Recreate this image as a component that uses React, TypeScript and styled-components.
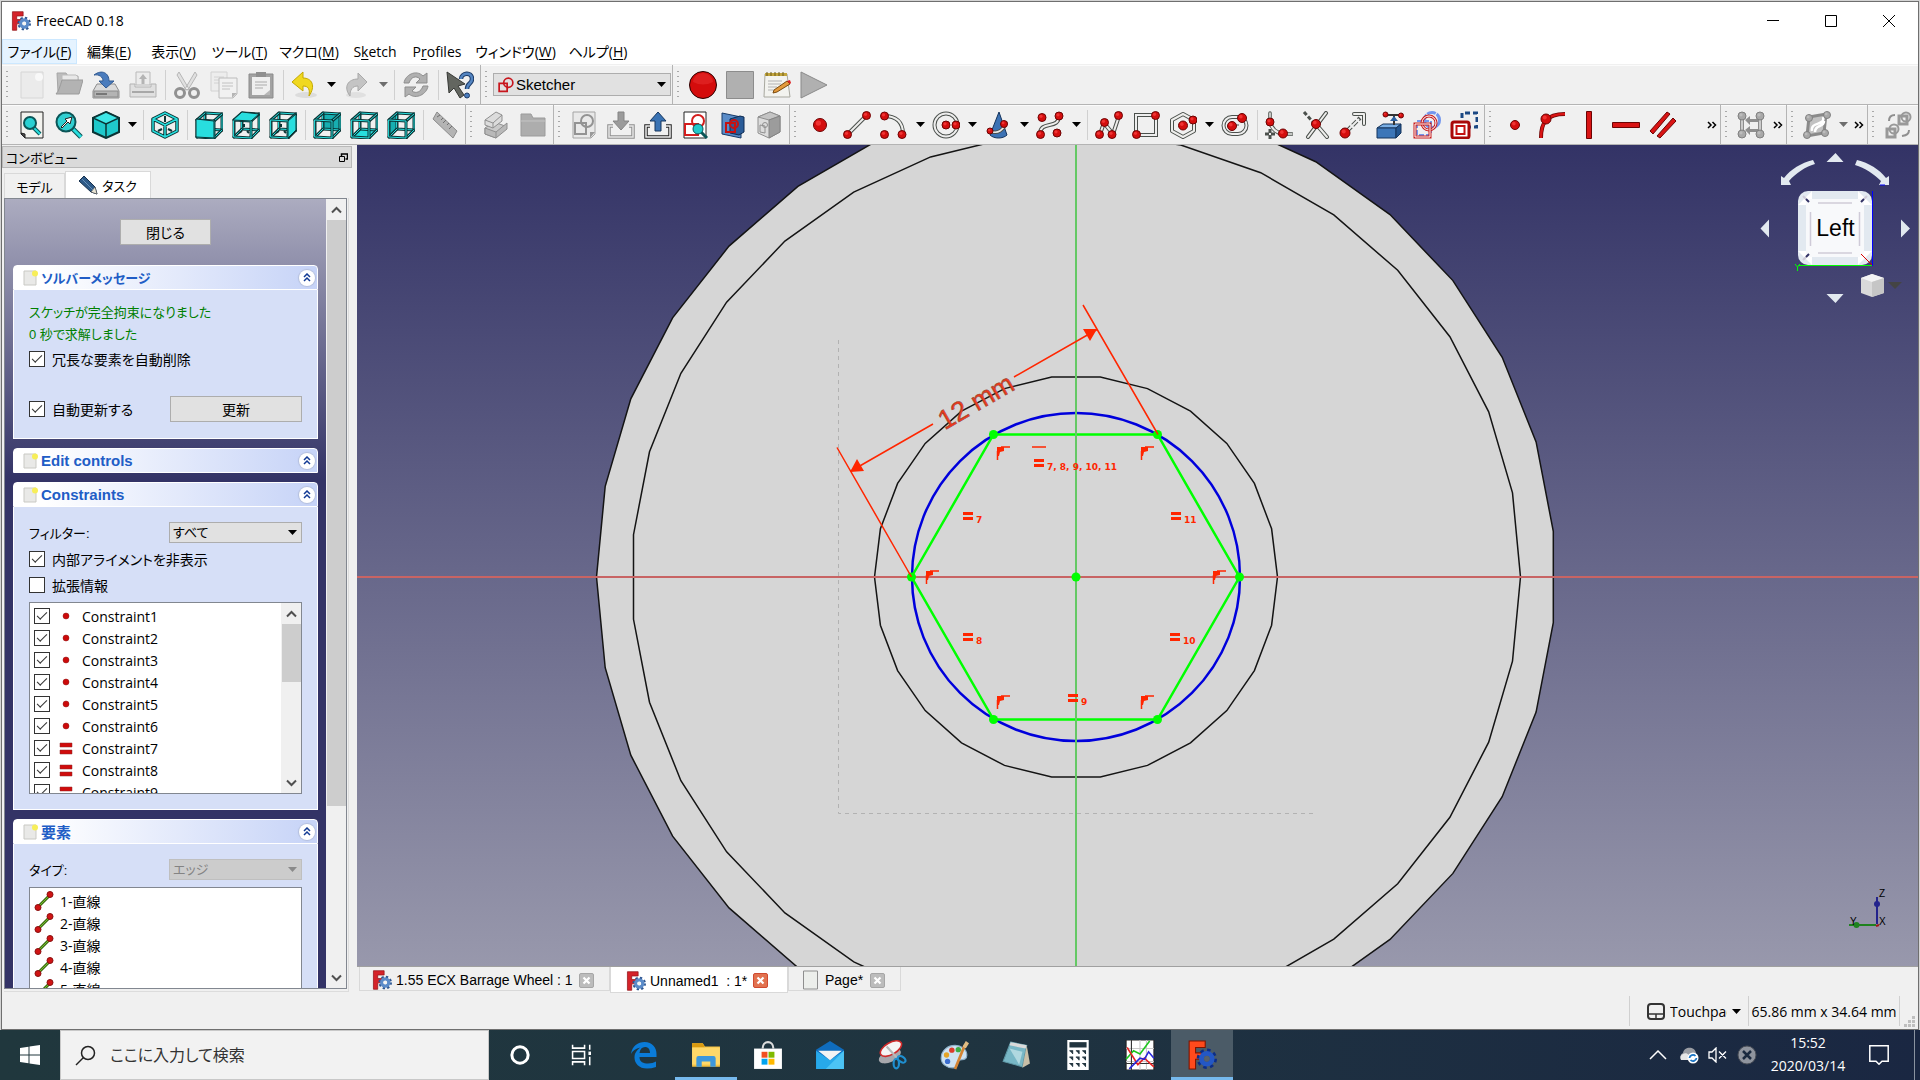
import React from "react";
import styled, { createGlobalStyle, css } from "styled-components";

const UI = `"Open Sans", "Noto Sans CJK JP", sans-serif`;
const GOTHIC = `"Liberation Sans", "Noto Sans CJK JP", sans-serif`;

const Global = createGlobalStyle`
  *, *::before, *::after { box-sizing: border-box; }
  html, body { margin: 0; padding: 0; background: #d4d4d4; }
  body { font-family: ${GOTHIC}; font-size: 14px; color: #000; font-feature-settings: "palt"; overflow: hidden; }
  button, select, input { font: inherit; color: inherit; margin: 0; font-feature-settings: inherit; }
  svg { display: block; flex: none; }
`;

/* ---------- shell ---------- */

const Desktop = styled.div`
  height: 100vh;
  display: flex;
  flex-direction: column;
`;
const AppWindow = styled.main`
  flex: 1;
  min-height: 0;
  margin: 1px 1px 0;
  border: 1px solid #6f6f6f;
  background: #f0f0f0;
  display: flex;
  flex-direction: column;
`;
const TitleBar = styled.header`
  height: 37px;
  background: #fff;
  display: flex;
  align-items: center;
  padding-left: 9px;
  font-family: ${UI};
  font-size: 14px;
`;
const TitleText = styled.span`
  flex: 1;
  padding-left: 5px;
`;
const CaptionButton = styled.button`
  width: 58px;
  height: 36px;
  border: 0;
  background: none;
  display: grid;
  place-items: center;
`;
const MenuBar = styled.nav`
  height: 26px;
  background: #fff;
  border-bottom: 1px solid #f0f0f0;
  display: flex;
  font-family: ${UI};
  font-size: 14px;
`;
const MenuItem = styled.button<{ $active?: boolean; $w: number }>`
  width: ${(p) => p.$w}px;
  border: 1px solid ${(p) => (p.$active ? "#cce8ff" : "transparent")};
  background: ${(p) => (p.$active ? "#e5f3ff" : "none")};
  padding: 0;
  white-space: nowrap;
  line-height: 24px;
  text-underline-offset: 2px;
`;

/* ---------- tool bars ---------- */

const ToolRow = styled.div`
  height: 40px;
  display: flex;
  border-bottom: 1px solid #b4b4b4;
  box-shadow: inset 0 1px #fbfbfb;
`;
const ToolGroup = styled.div<{ $grow?: boolean; $open?: boolean }>`
  display: flex;
  align-items: center;
  flex: ${(p) => (p.$grow ? "1 1 auto" : "none")};
  padding-right: 1px;
  border-right: ${(p) => (p.$open ? 0 : "1px solid #b4b4b4")};
`;
const Grip = styled.span`
  width: 12px;
  height: 32px;
  flex: none;
  background: radial-gradient(circle, #a8a8a8 1px, transparent 1px) 3px 0 / 4px 5px repeat-y;
`;
const Tool = styled.button<{ $menu?: boolean }>`
  width: ${(p) => (p.$menu ? 52 : 37)}px;
  height: 36px;
  flex: none;
  border: 0;
  padding: 0 0 0 4px;
  background: none;
  display: flex;
  align-items: center;
  gap: 8px;
`;
const Divider = styled.span`
  width: 1px;
  height: 30px;
  margin: 0 3px;
  flex: none;
  background: #d0d0d0;
`;
const More = styled.button`
  width: 15px;
  height: 36px;
  margin-left: auto;
  flex: none;
  border: 0;
  padding: 0;
  background: none;
  display: grid;
  place-items: center;
`;

/* ---------- form controls ---------- */

const PickWrap = styled.label<{ $off?: boolean; $h: number; $w: number }>`
  position: relative;
  display: flex;
  align-items: center;
  width: ${(p) => p.$w}px;
  height: ${(p) => p.$h}px;
  border: 1px solid ${(p) => (p.$off ? "#bfbfbf" : "#adadad")};
  background: ${(p) => (p.$off ? "#ccc" : "#e1e1e1")};
  color: ${(p) => (p.$off ? "#838383" : "#000")};
`;
const PickSelect = styled.select<{ $icon?: boolean }>`
  appearance: none;
  border: 0;
  background: none;
  width: 100%;
  height: 100%;
  padding: 0 16px 0 ${(p) => (p.$icon ? 22 : 3)}px;
  font-size: ${(p) => (p.$icon ? 15 : 13)}px;
  opacity: 1;
  outline: 0;
`;
const PickMark = styled.span<{ $side: "left" | "right" }>`
  position: absolute;
  ${(p) => p.$side}: 4px;
  top: 0;
  bottom: 0;
  display: grid;
  place-items: center;
  pointer-events: none;
`;
const Tick = styled.input`
  appearance: none;
  width: 16px;
  height: 16px;
  flex: none;
  border: 1px solid #333;
  background: #fff;
  display: grid;
  place-items: center;
  &:checked::after {
    content: "";
    width: 10px;
    height: 5px;
    margin-top: -4px;
    border: solid #333;
    border-width: 0 0 1px 1px;
    transform: rotate(-45deg);
  }
`;
const CheckLabel = styled.label`
  display: flex;
  align-items: center;
  gap: 7px;
  height: 26px;
  white-space: nowrap;
`;
const FieldLabel = styled.label`
  font-size: 13px;
`;
const PushButton = styled.button<{ $w: number }>`
  width: ${(p) => p.$w}px;
  height: 26px;
  border: 1px solid #adadad;
  background: #e1e1e1;
  padding: 0;
`;

/* ---------- left dock ---------- */

const Body = styled.div`
  flex: 1;
  min-height: 0;
  display: flex;
`;
const Dock = styled.aside`
  width: 355px;
  flex: none;
  display: flex;
  flex-direction: column;
  padding: 1px 3px 0 0;
`;
const DockTitle = styled.div`
  height: 22px;
  margin-right: 2px;
  border: 1px solid #b9b9b9;
  background: #dadada;
  display: flex;
  align-items: center;
  justify-content: space-between;
  padding: 0 3px;
  font-size: 13px;
`;
const DockTabs = styled.div`
  height: 30px;
  display: flex;
  align-items: flex-end;
  padding-left: 2px;
`;
const DockTab = styled.button<{ $on?: boolean }>`
  height: ${(p) => (p.$on ? 27 : 25)}px;
  width: ${(p) => (p.$on ? 86 : 61)}px;
  border: 1px solid #d9d9d9;
  border-bottom: 0;
  background: ${(p) => (p.$on ? "#fff" : "#f0f0f0")};
  padding: 0;
  display: flex;
  align-items: center;
  justify-content: center;
  gap: 4px;
  font-size: 13px;
`;
const DockFrame = styled.div`
  flex: 1;
  min-height: 0;
  margin: 0 5px 1px 2px;
  padding: 0 1px 2px 0;
  border: 1px solid #dcdcdc;
  border-width: 0 1px 1px 0;
  display: flex;
`;
const ScrollArea = styled.div`
  flex: 1;
  border: 1px solid #828790;
  display: flex;
  min-height: 0;
`;
const TaskList = styled.div`
  flex: 1;
  min-width: 0;
  padding: 20px 8px 0;
  overflow: hidden;
  display: flex;
  flex-direction: column;
  background: linear-gradient(#acacc0, #333366 280px);
`;
const CloseRow = styled.div`
  display: flex;
  justify-content: center;
  padding-bottom: 20px;
`;
const Card = styled.section`
  flex: none;
  margin-bottom: 9px;
`;
const CardHead = styled.h2<{ $kana?: boolean }>`
  margin: 0;
  height: 25px;
  border: 1px solid #fff;
  border-radius: 4px 4px 0 0;
  background: linear-gradient(90deg, #fff 10%, #c6d3f7);
  display: flex;
  align-items: center;
  gap: 3px;
  padding: 0 2px 0 8px;
  color: #215dc6;
  font-size: ${(p) => (p.$kana ? 13 : 15)}px;
  font-weight: 700;
`;
const CardTitle = styled.span`
  flex: 1;
`;
const Fold = styled.button`
  width: 16px;
  height: 16px;
  padding: 0;
  border: 0;
  border-radius: 50%;
  background: #fff;
  box-shadow: 0 0 1px 1px #b4bfdc;
  display: grid;
  place-items: center;
`;
const CardBody = styled.div<{ $tall: number }>`
  min-height: ${(p) => p.$tall}px;
  border: 1px solid #fff;
  border-top: 0;
  background: #d6dff7;
  padding: 12px 15px 15px;
  display: flex;
  flex-direction: column;
`;
const Solved = styled.p`
  margin: 0;
  font-size: 13px;
  line-height: 22px;
  color: #008000;
`;
const FormRow = styled.div<{ $gap?: number }>`
  display: flex;
  align-items: center;
  justify-content: space-between;
  margin-top: ${(p) => p.$gap ?? 0}px;
`;
const ListBox = styled.div<{ $h: number; $gap: number }>`
  height: ${(p) => p.$h}px;
  margin-top: ${(p) => p.$gap}px;
  border: 1px solid #828790;
  background: #fff;
  display: flex;
  overflow: hidden;
  font-family: ${UI};
`;
const Rows = styled.ul`
  flex: 1;
  list-style: none;
  margin: 0;
  padding: 2px 4px;
`;
const Row = styled.li`
  height: 22px;
  display: flex;
  align-items: center;
`;
const RowLabel = styled.label<{ $tight?: boolean }>`
  display: flex;
  align-items: center;
  gap: ${(p) => (p.$tight ? 6 : 8)}px;
`;
const Track = styled.div`
  width: 20px;
  flex: none;
  background: #f0f0f0;
  display: flex;
  flex-direction: column;
  align-items: center;
`;
const Arrow = styled.button`
  height: 21px;
  width: 100%;
  padding: 0;
  border: 0;
  background: none;
  display: grid;
  place-items: center;
`;
const Thumb = styled.div<{ $share: number }>`
  width: 19px;
  flex: ${(p) => p.$share} 0 0;
  background: #cdcdcd;
`;
const Rest = styled.div<{ $share: number }>`
  flex: ${(p) => p.$share} 0 0;
`;

/* ---------- 3D view ---------- */

const Center = styled.section`
  flex: 1;
  min-width: 0;
  display: flex;
  flex-direction: column;
`;
const View = styled.div`
  position: relative;
  flex: 1;
  min-height: 0;
  overflow: hidden;
  background: linear-gradient(#333366, #9898ac);
`;
const Scene = styled.svg`
  width: 100%;
  height: 100%;
`;
const Corner = styled.div<{ $bottom?: boolean }>`
  position: absolute;
  right: 0;
  ${(p) => (p.$bottom ? css`bottom: 0;` : css`top: 0;`)}
`;
const DocTabs = styled.div`
  height: 27px;
  border-top: 1px solid #a0a0a0;
  display: flex;
  align-items: flex-start;
  padding-left: 2px;
`;
const DocTab = styled.div<{ $on?: boolean; $w: number }>`
  width: ${(p) => p.$w}px;
  height: ${(p) => (p.$on ? 26 : 24)}px;
  border: 1px solid #d9d9d9;
  border-top: 0;
  background: ${(p) => (p.$on ? "#fff" : "#f0f0f0")};
  display: flex;
  align-items: center;
  padding: ${(p) => (p.$on ? "2px 19px 0 15px" : "3px 15px 0 12px")};
  gap: 4px;
`;
const DocName = styled.button`
  flex: 1;
  border: 0;
  padding: 0;
  background: none;
  text-align: left;
  white-space: pre;
`;
const DocClose = styled.button<{ $on?: boolean }>`
  width: 15px;
  height: 15px;
  padding: 0;
  border: 1px solid ${(p) => (p.$on ? "#d04a30" : "#a6a6a6")};
  border-radius: 2px;
  background: ${(p) => (p.$on ? "#e2724f" : "#bcbcbc")};
  display: grid;
  place-items: center;
`;

/* ---------- status bar ---------- */

const Status = styled.footer`
  height: 36px;
  display: flex;
  justify-content: flex-end;
  align-items: center;
  font-family: ${UI};
  font-size: 14px;
`;
const StatusLine = styled.span`
  width: 1px;
  height: 30px;
  background: #d0d0d0;
`;
const NavStyle = styled.button`
  width: 118px;
  border: 0;
  padding: 0 7px 0 17px;
  background: none;
  display: flex;
  align-items: center;
  gap: 5px;
`;
const NavName = styled.span`
  width: 59px;
  overflow: hidden;
  white-space: nowrap;
  text-align: left;
`;
const Size = styled.span`
  width: 150px;
  text-align: center;
  white-space: nowrap;
`;
const SizeGrip = styled.span`
  width: 18px;
  align-self: flex-end;
  display: grid;
  place-items: center;
  padding-bottom: 2px;
`;

/* ---------- task bar ---------- */

const TaskBar = styled.footer`
  height: 50px;
  background: linear-gradient(90deg, #20373d, #1f3440 50%, #1a2742);
  display: flex;
  color: #fff;
  font-family: ${UI};
`;
const TaskButton = styled.button<{ $on?: boolean; $line?: boolean; $w?: number }>`
  width: ${(p) => p.$w ?? 62}px;
  border: 0;
  padding: 0;
  background: ${(p) => (p.$on ? "#4b5b67" : "none")};
  box-shadow: ${(p) => (p.$line ? "inset 0 -3px #76b9ed" : "none")};
  display: grid;
  place-items: center;
`;
const SearchBox = styled.label`
  width: 429px;
  border: 1px solid #c8c8c8;
  background: #f2f2f2;
  display: flex;
  align-items: center;
  gap: 14px;
  padding-left: 14px;
`;
const SearchInput = styled.input`
  flex: 1;
  border: 0;
  padding: 0;
  outline: 0;
  background: none;
  font-size: 16px;
  &::placeholder { color: #333; opacity: 1; }
`;
const Tray = styled.div`
  margin-left: auto;
  display: flex;
  align-items: stretch;
`;
const Clock = styled.time`
  width: 92px;
  text-align: center;
  line-height: 23px;
  font-size: 14px;
  padding-top: 1px;
`;
const PeekEdge = styled.span`
  width: 6px;
  margin-left: 10px;
  border-left: 1px solid #8a93a0;
`;

/* ---------- icon primitives ---------- */

type P = { children?: React.ReactNode; s?: number };
const I = ({ children, s = 28 }: P) => (
  <svg width={s} height={s} viewBox="0 0 28 28" fill="none" aria-hidden="true">{children}</svg>
);
const Ball = ({ x, y, r = 4, gray }: { x: number; y: number; r?: number; gray?: boolean }) => (
  <g>
    <circle cx={x} cy={y} r={r} fill={gray ? "#a8a8a8" : "#d40e0e"} stroke={gray ? "#808080" : "#6d0303"} />
    <circle cx={x - r * 0.25} cy={y - r * 0.3} r={r * 0.4} fill={gray ? "#bcbcbc" : "#f03434"} />
  </g>
);
const Tube = ({ d, w = 4, a = "#4b504c", b = "#eeeeec" }: { d: string; w?: number; a?: string; b?: string }) => (
  <g strokeLinejoin="round" strokeLinecap="round">
    <path d={d} stroke={a} strokeWidth={w} />
    <path d={d} stroke={b} strokeWidth={w - 2} />
  </g>
);
const Down = ({ c = "#000" }: { c?: string }) => (
  <svg width="9" height="5" viewBox="0 0 9 5" aria-hidden="true"><path d="M0 0h9L4.500 5z" fill={c} /></svg>
);
const Chev = ({ up, c = "#505050" }: { up?: boolean; c?: string }) => (
  <svg width="11" height="8" viewBox="0 0 11 8" fill="none" aria-hidden="true">
    <path d={up ? "M1 6.500L5.500 2 10 6.500" : "M1 1.500L5.500 6 10 1.500"} stroke={c} strokeWidth="2" />
  </svg>
);
const Chevrons = () => (
  <svg width="10" height="8" viewBox="0 0 10 8" fill="none" aria-hidden="true">
    <path d="M1 1l3 3-3 3M5.500 1l3 3-3 3" stroke="#000" strokeWidth="1.500" />
  </svg>
);
const T = "#28dede";
const D = "#0b3435";
const cubeEdges = [
  "M10 2L27 3V19L10 18Z",
  "M2 9L10 2M19 10L27 3M19 27L27 19M2 26L10 18",
  "M2 9L19 10V27L2 26Z",
];
const Box = ({ face }: { face: string }) => {
  const faces: Record<string, string> = {
    front: "M1 8L19 10V27L1 26Z",
    top: "M1 9L10 1 27 3 19 10Z",
    right: "M19 10L27 3V19L19 27Z",
    rear: "M10 2L27 3V19L10 18Z",
    bottom: "M2 26L10 18 27 19 19 27Z",
    left: "M2 9L10 2V18L2 26Z",
  };
  const behind = ["rear", "bottom", "left"].includes(face);
  const f = <path d={faces[face]} fill={face === "left" || face === "rear" ? "#17aeb0" : T} stroke={D} />;
  return (
    <I>
      {behind && f}
      <Tube d={cubeEdges[0]} w={3} a={D} b={T} />
      <Tube d={cubeEdges[1]} w={3} a={D} b={T} />
      <Tube d={cubeEdges[2]} w={3} a={D} b={T} />
      {!behind && <path d="M7 22l3-2M12 13v3M15 20l2 2" stroke={D} strokeWidth="2" />}
      {!behind && f}
    </I>
  );
};
const Logo = ({ s = 20, vivid }: { s?: number; vivid?: boolean }) => (
  <svg width={s} height={s} viewBox="0 0 28 28" fill="none" aria-hidden="true">
    <path d="M2 1h15v6H8v5h6v6H8v9H2z" fill={vivid ? "#ff4a1c" : "#d5232a"} stroke={vivid ? "#7c1400" : "#8e1116"} />
    <circle cx="18.500" cy="17.500" r="8" stroke={vivid ? "#0c2d86" : "#2f5791"} strokeWidth="3" strokeDasharray="3.200 3.080" />
    <circle cx="18.500" cy="17.500" r="5" stroke={vivid ? "#2457c4" : "#5b8bc9"} strokeWidth="4.500" />
    <circle cx="18.500" cy="17.500" r="2.500" fill={vivid ? "#57616e" : "#f4f4f4"} />
  </svg>
);

const G = "#a4a4a4";

const icons: Record<string, React.ReactNode> = {
  new: <I><path d="M3 1h22v26H3z" fill="#ebebeb" stroke="#d6d6d6" /><circle cx="21" cy="6" r="4" fill="#f8f8f8" /></I>,
  open: <I><path d="M2 2h9l2 3h10v16H3z" fill="#bcbcbc" stroke="#a6a6a6" /><path d="M7 4h14l2 2v10H7z" fill="#e8e8e8" stroke="#bbb" /><path d="M7 9h21l-4 14H1c3-3 4-8 6-14z" fill="#b3b3b3" stroke="#9b9b9b" /></I>,
  save: <I><path d="M5 13h18l4 7v7H1v-7z" fill="#dadada" stroke="#8d8d8d" /><path d="M2 20h24v6H2z" fill="#b4b4b4" stroke="#8a8a8a" /><path d="M4 22h11v2H4z" fill="#777" /><path d="M2 4c8-6 15-2 15 6h5l-8 7-7-7h4c0-4-4-7-9-6z" fill="#4a7cbd" stroke="#315a92" /></I>,
  print: <I><path d="M7 1h14v13H7z" fill="#ececec" stroke="#bababa" /><path d="M14 3l4 5h-2.500v5h-3V8H10z" fill="#b4b4b4" /><path d="M1 13h5v3h16v-3h5v13H1z" fill="#e0e0e0" stroke="#b3b3b3" /><path d="M3 21h22" stroke="#a8a8a8" strokeWidth="2" /></I>,
  cut: <I><path d="M6 1l10 17-3 1L4 4zM22 1L12 18l3 1 9-15z" fill="#e0e0e0" stroke="#b6b6b6" /><ellipse cx="7" cy="22" rx="4.500" ry="4.500" stroke="#919191" strokeWidth="3" /><ellipse cx="21" cy="22" rx="4.500" ry="4.500" stroke="#919191" strokeWidth="3" /></I>,
  copy: <I><path d="M1 1h16v19H1z" fill="#ededed" stroke="#d2d2d2" /><path d="M4 6h10M4 9h10M4 12h6" stroke="#d2d2d2" /><path d="M9 7h18v16l-4 4H9z" fill="#f1f1f1" stroke="#bcbcbc" /><path d="M12 12h11M12 15h11M12 18h8" stroke="#c2c2c2" /><path d="M27 22l-5 5v-5z" fill="#b5b5b5" /></I>,
  paste: <I><path d="M2 3h24v24H2z" fill="#a2a2a2" stroke="#8b8b8b" /><path d="M5 6h18v18H5z" fill="#efefef" /><path d="M9 1h10v5H9z" fill="#8f8f8f" /><path d="M8 11h12M8 14h12M8 17h8" stroke="#c2c2c2" strokeWidth="1.500" /><path d="M23 19l-6 5h6z" fill="#b7b7b7" /></I>,
  undo: <I><ellipse cx="15" cy="24" rx="11" ry="3" fill="#dcdcdc" /><path d="M12 1v6c9 0 13 8 6 18 1-6 0-10-6-10v5L1 11z" fill="#f0d820" stroke="#c4a800" /></I>,
  redo: <I><ellipse cx="13" cy="24" rx="10" ry="3" fill="#e0e0e0" /><path d="M15 2v6C5 8 0 16 7 25c0-6 2-10 8-10v5l9-9z" fill="#c4c4c4" stroke="#a9a9a9" /></I>,
  refresh: <I><path d="M2 12C3 4 14-2 21 5l4-3v10H14l4-4c-4-4-9-2-11 4z" fill="#b0b0b0" stroke="#8d8d8d" /><path d="M26 15c-1 8-12 14-19 8l-4 3V16h11l-4 4c4 3 9 1 11-5z" fill="#b0b0b0" stroke="#8d8d8d" /></I>,
  whats: <I><path d="M1 1l18 12-7 2 6 9-4 3-6-10-5 5z" fill="#636660" stroke="#363835" /><path d="M15 8c0-6 11-8 11 0 0 5-5 4-5 10" stroke="#1d3b66" strokeWidth="4.500" /><path d="M15 8c0-6 11-8 11 0 0 5-5 4-5 10" stroke="#5485c2" strokeWidth="2.500" /><circle cx="21" cy="24.500" r="2.500" fill="#4a7cbd" stroke="#1d3b66" /></I>,
  record: <I><circle cx="14" cy="14" r="13.500" fill="#d40c0c" stroke="#280000" /><path d="M4 11a10 9 0 0 1 20 0q-10 5-20 0" fill="#e83232" opacity=".5" /></I>,
  stop: <I><path d="M.5.500h27v27H.5z" fill="#b0b0b0" stroke="#8c8c8c" /></I>,
  note: <I><path d="M2 3h22l3 23H1z" fill="#f3f3ef" stroke="#a8a89f" /><path d="M2 2h22v3H2z" fill="#c2a53b" /><path d="M4 1v4M8 1v4M12 1v4M16 1v4M20 1v4" stroke="#6b5b1d" /><path d="M5 10h14M5 13h13M5 16h9M5 19h6" stroke="#b3b3b3" /><path d="M11 19l13-9 3 3-13 8-4 1z" fill="#e49a3b" stroke="#7b4b10" /><path d="M24 10l3-1 1 3-1 1z" fill="#d22" /></I>,
  play: <I><path d="M1 1l26 13L1 27z" fill="#b0b0b0" stroke="#8a8a8a" /></I>,
  fitall: <I><path d="M3 1h22v26H7l-4-4z" fill="#f2f2ee" stroke="#222" /><path d="M3 22l4 5v-4z" fill="#555" stroke="#222" /><path d="M15 16l7 7" stroke="#0a5557" strokeWidth="4" /><path d="M15 16l7 7" stroke={T} strokeWidth="2" /><circle cx="12" cy="12" r="6" fill="#2ad0d2" stroke="#0a5557" strokeWidth="2" /></I>,
  fitsel: <I><path d="M17 17l9 9" stroke="#0a4d4f" strokeWidth="5" /><path d="M17 17l9 9" stroke={T} strokeWidth="3" /><circle cx="11" cy="11" r="9.500" fill="#31cfd1" stroke="#0a5557" strokeWidth="2" /><path d="M6 16l6-6-2-2 7-2-2 7-2-2-6 6z" fill="#fff" stroke="#222" /></I>,
  cube: <I><path d="M14 1l13 6v14l-13 6-13-6V7z" fill="#1fc9cb" stroke={D} strokeWidth="2" /><path d="M14 1l13 6-13 6L1 7z" fill="#3ee6e6" stroke={D} strokeWidth="1.500" /><path d="M14 13v14" stroke={D} strokeWidth="1.500" /></I>,
  axo: <I><Tube d="M14 2l12 6v12l-12 6-12-6V8zM2 8l12 6 12-6M14 14v12" w={3.500} a={D} b={T} /><path d="M14 5v6M7 20l4-2M17 18l4 2" stroke={D} strokeWidth="2" /></I>,
  ruler: <I><path d="M6 1l20 19-4 7L2 8z" fill="#b4b4b4" stroke="#8c8c8c" /><path d="M9 4l-3 2M12 7l-2 2M15 9l-3 3M18 12l-2 2M21 15l-3 3" stroke="#6f6f6f" /></I>,
  part: <I><path d="M3 17l9-6 11 4-9 12-11-4z" fill="#cacaca" stroke="#8f8f8f" /><path d="M3 17l11 4 11-9v6l-11 9-11-4z" fill="#b9b9b9" stroke="#8f8f8f" /><path d="M3 9l11-8 6 3v6l-9 7-8-3z" fill="#dcdcdc" stroke="#8f8f8f" /><path d="M3 9l8 3 9-8M11 12v5" stroke="#8f8f8f" /><path d="M14 21v6" stroke="#8f8f8f" /></I>,
  folder: <I><path d="M2 3h10l2 4h12v18H2z" fill="#adadad" stroke="#9b9b9b" /><path d="M2 10h24" stroke="#c4c4c4" /></I>,
  sketch: <I><path d="M3 1h22v22l-4 4H3z" fill="#e9e9e9" stroke={G} /><path d="M5 12h11v11H5z" stroke="#939393" strokeWidth="2" /><circle cx="17" cy="10" r="6" stroke="#939393" strokeWidth="2" /><path d="M25 21l-5 6v-6z" fill="#999" /></I>,
  into: <I><path d="M6 15H2v11h24V15h-4" stroke="#8e8e8e" strokeWidth="3.500" /><path d="M6 15H2v11h24V15h-4" stroke="#e6e6e6" strokeWidth="1.500" /><path d="M11 1h6v9h5l-8 9-8-9h5z" fill="#9b9b9b" stroke="#848484" /></I>,
  outof: <I><path d="M6 15H2v11h24V15h-4" stroke="#222" strokeWidth="3.500" /><path d="M6 15H2v11h24V15h-4" stroke="#eee" strokeWidth="1.500" /><path d="M14 1l8 9h-5v10h-6V10H6z" fill="#3a73b4" stroke="#16365f" /></I>,
  viewsk: <I><path d="M3 1h22v26H3z" fill="#fff" stroke="#222" /><path d="M4 13h13v11H4z" stroke="#d31d1d" strokeWidth="2" /><circle cx="17" cy="10" r="6" stroke="#d31d1d" strokeWidth="2" /><path d="M20 21l6 6" stroke="#0a5557" strokeWidth="3" /><circle cx="17" cy="18" r="5" fill="#22c9cb" stroke="#0a5557" /></I>,
  mapsk: <I><path d="M4 2l19 4v21L4 23z" fill="#5a8cc8" stroke="#173a68" /><path d="M12 8l10-3 4 1v15l-5 3-9-2z" fill="#2a5c98" stroke="#0e2b52" /><path d="M8 12h9v9H8z" stroke="#c51212" strokeWidth="2" /><circle cx="16" cy="13" r="4" stroke="#c51212" strokeWidth="2" /></I>,
  solid: <I><path d="M3 6l12-5 10 4v16l-11 6-11-5z" fill="#dcdcdc" stroke="#8e8e8e" /><path d="M3 6l12-5 10 4-11 4z" fill="#c4c4c4" stroke="#8e8e8e" /><path d="M14 9l11-4v16l-11 6z" fill="#9c9c9c" stroke="#848484" /><path d="M5 14l5 1v7l-5-1z" stroke="#909090" /><circle cx="10" cy="14" r="2.500" stroke="#909090" /></I>,
  point: <I><Ball x={14} y={14} r={6.500} /></I>,
  line: <I><Tube d="M5 23L23 5" /><Ball x={4.500} y={23.500} /><Ball x={23.500} y={4.500} /></I>,
  arc: <I><Tube d="M4 5c12 0 19 6 19 18" /><Ball x={4.500} y={5} /><Ball x={4.500} y={23.500} /><Ball x={22} y={23.500} /></I>,
  circle: <I><circle cx="14" cy="14" r="11.500" stroke="#4b504c" strokeWidth="4" /><circle cx="14" cy="14" r="11.500" stroke="#eee" strokeWidth="2" /><Ball x={14} y={14} /><Ball x={24} y={14} /></I>,
  conic: <I><path d="M15 1l8 23c-4 4-13 4-17 0z" fill="#3c72b4" stroke="#15345d" /><Tube d="M6 20c8 4 14-2 16-8" w={3.500} /><Ball x={6} y={20} r={3} /><Ball x={20} y={13} r={3.500} /></I>,
  spline: <I><Tube d="M4 23c0-14 19-4 19-18" /><Ball x={6} y={6.500} /><Ball x={23} y={5} /><Ball x={4.500} y={23.500} /><Ball x={21} y={22} /></I>,
  poly: <I><Tube d="M5 23L9 12 18 23 24 5" /><Ball x={4.500} y={23.500} /><Ball x={9.500} y={11.500} /><Ball x={17} y={23.500} /><Ball x={23.500} y={4.500} /></I>,
  rect: <I><path d="M4 4h20v20H4z" stroke="#4b504c" strokeWidth="4" /><path d="M4 4h20v20H4z" stroke="#eee" strokeWidth="2" /><Ball x={23.500} y={4.500} /><Ball x={4.500} y={23.500} /></I>,
  hex: <I><Tube d="M14 3l11 6v11l-11 6-11-6V9z" /><Ball x={14} y={14.500} r={4.500} /><Ball x={24} y={9} /></I>,
  slot: <I><rect x="2.500" y="6" width="23" height="17" rx="8.500" stroke="#4b504c" strokeWidth="4" /><rect x="2.500" y="6" width="23" height="17" rx="8.500" stroke="#eee" strokeWidth="2" /><path d="M10 14h8" stroke="#4b504c" /><Ball x={11} y={15} r={4.500} /><Ball x={21} y={7} r={4.500} /></I>,
  fillet: <I><path d="M5 18v10M0 23h10" stroke="#4b504c" strokeWidth="3" strokeDasharray="4 2" /><Tube d="M5 2v8M19 23h8" w={3.500} /><Tube d="M5 10c1 7 6 12 14 13" /><Ball x={5} y={11} /><Ball x={18} y={22.500} r={4.500} /></I>,
  trim: <I><Tube d="M24 2L6 26M14 13l11 13" /><path d="M2 1l9 10" stroke="#4b504c" strokeWidth="3" strokeDasharray="4 2" /><Ball x={14} y={13} r={4.500} /></I>,
  extend: <I><path d="M8 20L21 7" stroke="#4b504c" strokeWidth="4" strokeDasharray="6 2" /><path d="M9 19L20 8" stroke="#eee" strokeWidth="2" /><Tube d="M15 3h10v10" /><Ball x={6} y={22} r={5} /></I>,
  external: <I><path d="M1 17l6-4h18l-5 4z" fill="#79aee4" stroke="#15345d" /><path d="M1 17h19v10H1z" fill="#3c76b8" stroke="#15345d" /><path d="M20 17l5-4v9l-5 5z" fill="#22558f" stroke="#15345d" /><path d="M10 4h16M18 4v10" stroke="#333" strokeWidth="2" /><path d="M14 10l4-5 4 5z" fill="#2c62a2" /><Ball x={9.500} y={3.500} r={2.500} /><Ball x={25} y={4.500} r={2.500} /></I>,
  carbon: <I><circle cx="19" cy="9" r="7.500" stroke="#7397ee" strokeWidth="3" strokeDasharray="9 1" /><path d="M4 10h14v14H4z" stroke="#7397ee" strokeWidth="2" strokeDasharray="5 2" /><circle cx="16" cy="12" r="7" stroke="#c81c1c" strokeWidth="3" /><circle cx="16" cy="12" r="7" stroke="#fff" /><path d="M2 13h15v13H2z" stroke="#c81c1c" strokeWidth="3" /><path d="M2 13h15v13H2z" stroke="#fff" /></I>,
  toggle: <I><path d="M12 7V2h15v14h-7" stroke="#1b4883" strokeWidth="3" strokeDasharray="5 3" /><rect x="2" y="11" width="17" height="16" rx="2" fill="#fff" stroke="#a80808" strokeWidth="3" /><path d="M6.500 15h8v8h-8z" stroke="#c40f0f" strokeWidth="2" /></I>,
  cpoint: <I><Ball x={14} y={14} r={4.500} /></I>,
  conobj: <I><path d="M3 27C3 12 8 3 27 3" stroke="#6d0303" strokeWidth="4" /><path d="M3 27C3 12 8 3 27 3" stroke="#d91414" strokeWidth="2.500" /><Ball x={8} y={8} r={5} /></I>,
  cvert: <I><path d="M11.500.500h5v27h-5z" fill="#d91414" stroke="#6d0303" /></I>,
  chor: <I><path d="M.5 11.500h27v5H.5z" fill="#d91414" stroke="#6d0303" /></I>,
  cpar: <I><path d="M1 20L18 1l3 2L4 23zM8 25L24 7l3 3-16 17z" fill="#d91414" stroke="#6d0303" /></I>,
  gtool: <I><Tube d="M5 5v18M23 5v18" a="#8d8d8d" b="#ccc" /><path d="M8 9l5-4v3h8v3h-8v3zM8 19l5-4v3h8v3h-8v3z" fill="#8f8f8f" /><Ball gray x={5} y={5} /><Ball gray x={5} y={23} /><Ball gray x={23} y={5} /><Ball gray x={23} y={23} /></I>,
  gspline: <I><path d="M6 6l17-3-2 19-17 3z" fill="#c2c2c2" stroke="#8a8a8a" strokeWidth="3" /><path d="M9 20c-2-10 14-5 11-14M12 21c0-8 9-4 9-11" stroke="#fff" strokeWidth="2.500" /><Ball gray x={6} y={7} r={3.500} /><Ball gray x={24} y={4} r={3.500} /><Ball gray x={4} y={24} r={3.500} /><Ball gray x={22} y={22} r={3.500} /></I>,
  gvirt: <I><path d="M15 5h8v8h-8zM3 18h8v8H3z" stroke="#999" strokeWidth="3" /><circle cx="22" cy="6" r="4.500" stroke="#999" strokeWidth="2" /><circle cx="10" cy="18" r="4.500" stroke="#999" strokeWidth="2" /><path d="M5 10c0-4 2-6 6-6M25 19c0 4-2 5-7 6" stroke="#8f8f8f" strokeWidth="2" /></I>,
};
for (const f of ["front", "top", "right", "rear", "bottom", "left"]) icons[f] = <Box face={f} />;

const SketchMark = ({ s = 16 }: P) => (
  <I s={s}><path d="M2 11h14v14H2z" stroke="#c8161d" strokeWidth="3" /><circle cx="18" cy="10" r="8" stroke="#c8161d" strokeWidth="3" /></I>
);
const Note = () => (
  <svg width="16" height="16" viewBox="0 0 16 16" aria-hidden="true">
    <path d="M2 1h12v14H2z" fill="#e9e9e7" stroke="#c9c9c4" /><circle cx="13" cy="3.500" r="3" fill="#f7ee59" />
  </svg>
);

/* ---------- tool bar contents ---------- */

const Tools = ({ items }: { items: string[] }) => (
  <>
    {items.map((it, i) => {
      if (it === "|") return <Divider key={i} />;
      const menu = it.endsWith("+");
      const dim = it.endsWith("-+");
      const name = it.replace(/-?\+$/, "");
      return (
        <Tool key={i} $menu={menu} aria-label={name}>
          {icons[name]}
          {menu && <Down c={dim ? "#6e6e6e" : "#000"} />}
        </Tool>
      );
    })}
  </>
);
const Group = ({ items, more, grow, open }: { items: string; more?: boolean; grow?: boolean; open?: boolean }) => (
  <ToolGroup $grow={grow} $open={open}>
    <Grip />
    <Tools items={items.split(" ")} />
    {more && <More aria-label="more"><Chevrons /></More>}
  </ToolGroup>
);

const menus: [string, string, string, number][] = [
  ["ファイル(", "F", ")", 75], ["編集(", "E", ")", 64], ["表示(", "V", ")", 65], ["ツール(", "T", ")", 67], ["マクロ(", "M", ")", 72],
  ["S", "k", "etch", 60], ["P", "r", "ofiles", 64], ["ウィンドウ(", "W", ")", 93], ["ヘルプ(", "H", ")", 72],
];

/* ---------- task cards ---------- */

const TaskCard = ({ title, tall, kana, children }: { title: string; tall?: number; kana?: boolean; children?: React.ReactNode }) => (
  <Card>
    <CardHead $kana={kana}>
      <Note />
      <CardTitle>{title}</CardTitle>
      <Fold aria-label={title}>
        <svg width="8" height="9" viewBox="0 0 8 9" fill="none" aria-hidden="true">
          <path d="M1 4l3-3 3 3M1 8l3-3 3 3" stroke="#123a94" strokeWidth="1.500" />
        </svg>
      </Fold>
    </CardHead>
    {tall && <CardBody $tall={tall}>{children}</CardBody>}
  </Card>
);
const Dot = () => <svg width="16" height="16" viewBox="0 0 16 16" aria-hidden="true"><circle cx="8" cy="8" r="3" fill="#cc0a0a" stroke="#8a1010" strokeWidth=".5" /></svg>;
const Equal = () => <svg width="16" height="16" viewBox="0 0 16 16" aria-hidden="true"><path d="M2 3h12v4H2zM2 10h12v4H2z" fill="#d00b0b" stroke="#8d2a2a" strokeWidth=".5" /></svg>;
const Edge = () => (
  <svg width="20" height="20" viewBox="0 0 20 20" aria-hidden="true">
    <path d="M4 16L16 4" stroke="#3d6b12" strokeWidth="3" /><path d="M4 16L16 4" stroke="#73c22b" />
    <circle cx="4" cy="16.500" r="3" fill="#d01414" stroke="#8a1010" /><circle cx="16" cy="3.500" r="3" fill="#d01414" stroke="#8a1010" />
  </svg>
);

/* ---------- sketch geometry ---------- */

const CX = 1076;
const CY = 577;
const ring = (n: number, r: number, start: number) =>
  Array.from({ length: n }, (_, i) => {
    const a = start + (i * 2 * Math.PI) / n;
    return `${(CX + r * Math.cos(a)).toFixed(1)},${(CY + r * Math.sin(a)).toFixed(1)}`;
  }).join(" ");
const hexagon: [number, number][] = [[911.5, 577], [993.5, 434.500], [1157.5, 434.500], [1239.5, 577], [1157.5, 719.5], [993.5, 719.5]];
const equals: [number, number, string][] = [
  [963, 516, "7"], [963, 637, "8"], [1068, 698, "9"], [1170, 637, "10"], [1171, 516, "11"], [1034, 463, "7, 8, 9, 10, 11"],
];
const touches: [number, number][] = [[997, 447], [1141, 447], [926, 571], [1213, 571], [997, 696], [1141, 696]];
const RED = "#ff2600";

const Sketch = () => (
  <Scene viewBox="357 145 1561 821" preserveAspectRatio="xMidYMid slice" fill="none">
    <polygon points={ring(33, 479.5, Math.PI)} fill="#d6d6d6" stroke="#141414" strokeWidth="1.500" />
    <polygon points={ring(33, 444.5, 0)} stroke="#141414" strokeWidth="1.500" />
    <path d="M838.500 340V813.500H1313" stroke="#b2b2b2" strokeDasharray="4 4" />
    <polygon points={ring(26, 201.5, 0)} stroke="#141414" strokeWidth="1.500" />
    <path d={`M357 ${CY}H1918`} stroke="#c86464" strokeWidth="2" />
    <circle cx={CX} cy={CY} r="164" stroke="#0000dc" strokeWidth="2.500" />
    <polygon points={hexagon.map((p) => p.join(",")).join(" ")} stroke="#00ff00" strokeWidth="2.500" />
    <path d={`M${CX} 145V966`} stroke="#64c864" strokeWidth="2" />
    {[...hexagon, [CX, CY]].map(([x, y], i) => <circle key={i} cx={x} cy={y} r="4.500" fill="#00ff00" />)}
    <path d="M837 447.500L911.500 577M1083 305L1158 434.500M851 471L933 424M1014 377L1097 329.500" stroke={RED} strokeWidth="1.500" />
    <path d="M850 472l7-13 7 12zM1097 329l-14 0 7 12z" fill={RED} />
    <text x="975" y="411" transform="rotate(-30 975 400)" textAnchor="middle" fontFamily="Liberation Sans, sans-serif" fontSize="27" fill="#f0381a" stroke="#9a4534" strokeWidth=".6">12 mm</text>
    <path d="M1032 447h14" stroke={RED} strokeWidth="1.500" />
    {equals.map(([x, y, t]) => (
      <g key={t} fill={RED}>
        <path d={`M${x} ${y - 4}h10v3h-10zM${x} ${y + 1}h10v3h-10z`} />
        <text x={x + 13} y={y + 7} fontFamily="DejaVu Sans, sans-serif" fontWeight="700" fontSize="9">{t}</text>
      </g>
    ))}
    {touches.map(([x, y]) => (
      <g key={`${x}-${y}`}>
        <path d={`M${x} ${y}h7v4l-4 1-1 4h-2z`} fill={RED} />
        <path d={`M${x + 0.5} ${y + 4}v9M${x + 4} ${y}h9`} stroke={RED} strokeWidth="1.500" />
      </g>
    ))}
  </Scene>
);

const NavCube = () => (
  <svg width="178" height="165" viewBox="1740 145 178 165" fill="none" aria-label="navigation cube">
    <g fill="#e2e9f0">
      <path d="M1835.500 153l8 9h-17zM1835.500 303l8-9h-17zM1760.500 228.500l8.500-9v18zM1910 228.500l-9-9v18z" />
      <path d="M1781 185v-9l3 2c7-9 17-15 29-18l2 4c-10 3-19 9-26 17l2 4zM1889 185v-9l-3 2c-7-9-17-15-29-18l-2 5c10 3 19 9 26 16l-2 4z" />
      <rect x="1798" y="191" width="74" height="74" rx="10" />
    </g>
    <path d="M1798 205l14-14v14zM1872 205l-14-14v14zM1798 251l14 14v-14zM1872 251l-14 14v-14z" fill="#fff" />
    <rect x="1806" y="199" width="58" height="58" rx="5" fill="#f8f9fb" />
    <path d="M1803 196l3 3M1867 196l-3 3M1803 260l3-3" stroke="#cfcbd8" strokeWidth="2" />
    <path d="M1806 199l3 3M1864 199l-3 3M1806 257l3-3" stroke="#333366" strokeWidth="2" />
    <path d="M1818 203h34M1818 253h34M1810.500 212v34M1859.500 212v34" stroke="#cfcbd8" strokeWidth="1.500" />
    <text x="1835.500" y="236" textAnchor="middle" fontFamily="Liberation Sans, sans-serif" fontSize="23" fill="#000">Left</text>
    <path d="M1872.500 191v75M1880 185h5" stroke="#0000ff" />
    <path d="M1798 265.500h74M1795 264l2.500 3 2.500-3M1797.500 267v4" stroke="#00ff00" />
    <path d="M1861 254l11 11" stroke="#d80000" />
    <path d="M1861 278l11-4 12 4v15l-12 4-11-4z" fill="#dadada" />
    <path d="M1861 278l11-4 12 4-12 4z" fill="#f4f4f4" />
    <path d="M1872 282l12-4v15l-12 4z" fill="#c6c6c6" />
    <path d="M1888 282h14l-7 7z" fill="#444" />
  </svg>
);
const AxisCross = () => (
  <svg width="100" height="90" viewBox="1818 876 100 90" fill="none" aria-label="axis cross">
    <path d="M1877 924V897" stroke="#23238c" strokeWidth="2" /><circle cx="1877" cy="904" r="3" fill="#23238c" />
    <path d="M1876 925h-27" stroke="#1e821e" strokeWidth="2" /><circle cx="1856.500" cy="925" r="3" fill="#1e821e" />
    <path d="M1876 926l3-1" stroke="#a01818" strokeWidth="2" />
    <g fill="#000" fontFamily="Liberation Sans, sans-serif" fontSize="10">
      <text x="1879" y="897">Z</text><text x="1850" y="925">Y</text><text x="1879" y="925">X</text>
    </g>
  </svg>
);

/* ---------- task bar icons ---------- */

const apps: [string, React.ReactNode][] = [
  ["Cortana", <I s={24}><circle cx="14" cy="14" r="9.500" stroke="#fff" strokeWidth="3.500" /></I>],
  ["Task view", <I s={24}><path d="M3 2v4h14V2M3 26v-4h14v4M3 10h14v8H3zM23 2v6M23 16v10" stroke="#fff" strokeWidth="1.800" /><path d="M21.500 10h3v4h-3z" fill="#fff" /></I>],
  ["Edge", <I s={28}><path d="M1 13C2 5 8 1 14.500 1c8 0 12 6 12 12v3H9.500c0 5 4 6.500 8.500 6.500 3 0 6-1 8-2V26c-3 1-6 1.500-9 1.500-8 0-12.500-5-12.500-11 0-5 3-8 6-10-5 1-8 3.500-9.500 6.500zM9.500 12h10.500c0-4-2-6-5-6s-5 2-5.500 6z" fill="#0a7bd8" /></I>],
  ["Explorer", <I s={30}><path d="M1 3h10l2 3h14v19H1z" fill="#f5c242" /><path d="M1 3h10l2 4H1z" fill="#d99a10" /><path d="M1 7h26v16H1z" fill="#ffd869" /><path d="M5 25v-8q0-2 2-2h14q2 0 2 2v8h-5v-5h-8v5z" fill="#3d97db" /></I>],
  ["Store", <I s={30}><path d="M9 8c0-8 10-8 10 0" stroke="#ddd" strokeWidth="2" /><path d="M1 8h26v19H1z" fill="#fff" /><path d="M8 11h5.500v5.500H8z" fill="#f25022" /><path d="M14.500 11H20v5.500h-5.500z" fill="#7fba00" /><path d="M8 17.500h5.500V23H8z" fill="#00a4ef" /><path d="M14.500 17.500H20V23h-5.500z" fill="#ffb900" /></I>],
  ["Mail", <I s={30}><path d="M1 9l13-8 13 8v18H1z" fill="#0f6cbd" /><path d="M1 10l13 9 13-9v17H1z" fill="#27a9ea" /><path d="M3 10h22l-11 9z" fill="#f4f4f4" /><path d="M27 10L10 27h17z" fill="#4cc3f4" /></I>],
  ["Snip", <I s={30}><ellipse cx="12" cy="15" rx="11" ry="5.500" transform="rotate(-25 12 15)" fill="#a7a7ac" /><ellipse cx="13" cy="8" rx="11" ry="5.500" transform="rotate(-30 13 8)" fill="#f5f5f5" stroke="#cf2b2b" strokeWidth="1.500" /><path d="M9 6l10 11" stroke="#b8b8b8" strokeWidth="2" /><ellipse cx="18" cy="22" rx="2.500" ry="4.500" stroke="#1f8fd0" strokeWidth="2" /><ellipse cx="23" cy="18" rx="4" ry="2.500" transform="rotate(35 23 18)" stroke="#1f8fd0" strokeWidth="2" /></I>],
  ["Paint", <I s={30}><path d="M2 17C2 9 9 5 15 5s11 4 11 9-4 4-7 5 0 7-6 7S2 22 2 17z" fill="#cfe3f2" stroke="#8db0c9" /><circle cx="7" cy="14" r="2.500" fill="#e5a427" /><circle cx="12" cy="9.500" r="2.500" fill="#dc3c2c" /><circle cx="18" cy="9" r="2.500" fill="#3eab44" /><circle cx="8" cy="20" r="2.500" fill="#3c6ed0" /><path d="M24 5L15 27" stroke="#d58534" strokeWidth="2.500" /><path d="M22 6l3-5 3 2-3 5z" fill="#e0bc84" /></I>],
  ["Notepad", <I s={30}><path d="M9 2l15 3-4 20L2 20z" fill="#78b7c6" stroke="#5f98a6" /><path d="M9 2l15 3-1 3-15-3z" fill="#dadada" /><path d="M24 5l3 17-7 4z" fill="#c8bfa8" /><path d="M8 8l12 3-3 12z" fill="#d5eef2" opacity=".6" /></I>],
  ["Calculator", <I s={30}><path d="M4 0h20v28H4z" fill="#fff" /><path d="M6 2h16v5H6z" fill="#22353f" /><path d="M6 10h3v3M12 10h3v3M18 10h3v3M6 16h3v3M12 16h3v3M18 16h3v3M6 22h3v3M12 22h3v3M18 22h3v3" fill="#22353f" stroke="#22353f" /></I>],
  ["Chart", <I s={30}><path d="M1 0h26v28H1z" fill="#fff" stroke="#222" /><path d="M6 0v28M1 20h26M14 0v28M20 0v28M1 8h26" stroke="#c8c8c8" /><path d="M6 0v28M1 22h26" stroke="#333" /><path d="M1 18l7-8 6 3L23 1" stroke="#1ec61e" strokeWidth="1.500" /><path d="M2 7l10 16 6-6 9 8" stroke="#e82424" strokeWidth="1.500" /><path d="M4 27l10-10 4 1 4-7 5 6" stroke="#2828d8" strokeWidth="1.500" /></I>],
  ["FreeCAD", <Logo s={30} vivid />],
];

const CloseX = () => <svg width="9" height="9" viewBox="0 0 9 9" aria-hidden="true"><path d="M1.500 1.500l6 6M7.500 1.500l-6 6" stroke="#fff" strokeWidth="2.200" /></svg>;

export default function App() {
  return (
    <Desktop>
      <Global />
      <AppWindow>
        <TitleBar>
          <Logo s={20} />
          <TitleText>FreeCAD 0.18</TitleText>
          <CaptionButton aria-label="Minimize"><svg width="12" height="12" viewBox="0 0 12 12"><path d="M0 5.500h12" stroke="#000" /></svg></CaptionButton>
          <CaptionButton aria-label="Maximize"><svg width="12" height="12" viewBox="0 0 12 12" fill="none"><path d="M.5.500h11v11H.5z" stroke="#000" /></svg></CaptionButton>
          <CaptionButton aria-label="Close"><svg width="12" height="12" viewBox="0 0 12 12"><path d="M0 0l12 12M12 0L0 12" stroke="#000" /></svg></CaptionButton>
        </TitleBar>
        <MenuBar>
          {menus.map(([a, k, b, w], i) => <MenuItem key={i} $w={w} $active={i === 0}>{a}<u>{k}</u>{b}</MenuItem>)}
        </MenuBar>
        <ToolRow>
          <Group items="new open save print | cut copy paste | undo+ redo-+ | refresh | whats" />
          <ToolGroup>
            <Grip />
            <PickWrap $w={178} $h={23}>
              <PickMark $side="left"><SketchMark /></PickMark>
              <PickSelect $icon aria-label="Workbench"><option>Sketcher</option></PickSelect>
              <PickMark $side="right"><Down /></PickMark>
            </PickWrap>
          </ToolGroup>
          <Group items="record stop note play" open />
        </ToolRow>
        <ToolRow>
          <Group items="fitall fitsel cube+ | axo | front top right | rear bottom left | ruler" />
          <Group items="part folder" />
          <Group items="sketch into outof viewsk mapsk solid" />
          <Group items="point line arc+ circle+ conic+ spline+ | poly rect hex+ slot | fillet trim extend external carbon toggle" />
          <Group items="cpoint conobj cvert chor cpar" more grow />
          <Group items="gtool" more />
          <Group items="gspline-+" more />
          <Group items="gvirt" open />
        </ToolRow>
        <Body>
          <Dock>
            <DockTitle>
              <span>コンボビュー</span>
              <svg width="9" height="9" viewBox="0 0 9 9" fill="none" aria-hidden="true"><path d="M2.500 3V1h6v5h-2" stroke="#000" strokeWidth="1.500" /><path d="M.5 3.500h5v5h-5z" stroke="#000" /></svg>
            </DockTitle>
            <DockTabs>
              <DockTab>モデル</DockTab>
              <DockTab $on>
                <svg width="19" height="19" viewBox="0 0 19 19" aria-hidden="true"><path d="M5 0l11 11 2 7-6-2L0 5z" fill="#2e5a88" stroke="#16304e" /><path d="M3 3l11 11" stroke="#6690b8" /><path d="M16 11l2 7-6-2z" fill="#e9e4d4" stroke="#444" strokeWidth=".5" /></svg>
                タスク
              </DockTab>
            </DockTabs>
            <DockFrame>
              <ScrollArea>
                <TaskList>
                  <CloseRow><PushButton $w={91}>閉じる</PushButton></CloseRow>
                  <TaskCard title="ソルバーメッセージ" kana tall={149}>
                    <Solved>スケッチが完全拘束になりました</Solved>
                    <Solved>0 秒で求解しました</Solved>
                    <CheckLabel><Tick type="checkbox" defaultChecked />冗長な要素を自動削除</CheckLabel>
                    <FormRow $gap={24}>
                      <CheckLabel><Tick type="checkbox" defaultChecked />自動更新する</CheckLabel>
                      <PushButton $w={132}>更新</PushButton>
                    </FormRow>
                  </TaskCard>
                  <TaskCard title="Edit controls" />
                  <TaskCard title="Constraints" tall={302}>
                    <FormRow $gap={3}>
                      <FieldLabel htmlFor="filter">フィルター:</FieldLabel>
                      <PickWrap as="span" $w={133} $h={21}>
                        <PickSelect id="filter"><option>すべて</option></PickSelect>
                        <PickMark $side="right"><Down /></PickMark>
                      </PickWrap>
                    </FormRow>
                    <FormRow $gap={3}><CheckLabel><Tick type="checkbox" defaultChecked />内部アライメントを非表示</CheckLabel></FormRow>
                    <CheckLabel><Tick type="checkbox" />拡張情報</CheckLabel>
                    <ListBox $h={192} $gap={4}>
                      <Rows>
                        {[1, 2, 3, 4, 5, 6, 7, 8, 9].map((n) => (
                          <Row key={n}>
                            <RowLabel><Tick type="checkbox" defaultChecked />{n < 7 ? <Dot /> : <Equal />}Constraint{n}</RowLabel>
                          </Row>
                        ))}
                      </Rows>
                      <Track>
                        <Arrow aria-label="up"><Chev up /></Arrow>
                        <Thumb $share={58} />
                        <Rest $share={90} />
                        <Arrow aria-label="down"><Chev /></Arrow>
                      </Track>
                    </ListBox>
                  </TaskCard>
                  <TaskCard title="要素" tall={200}>
                    <FormRow $gap={3}>
                      <FieldLabel htmlFor="kind">タイプ:</FieldLabel>
                      <PickWrap as="span" $off $w={133} $h={21}>
                        <PickSelect id="kind" disabled><option>エッジ</option></PickSelect>
                        <PickMark $side="right"><Down c="#8a8a8a" /></PickMark>
                      </PickWrap>
                    </FormRow>
                    <ListBox $h={150} $gap={7}>
                      <Rows>
                        {[1, 2, 3, 4, 5].map((n) => <Row key={n}><RowLabel as="span" $tight><Edge />{n}-直線</RowLabel></Row>)}
                      </Rows>
                    </ListBox>
                  </TaskCard>
                </TaskList>
                <Track>
                  <Arrow aria-label="up"><Chev up /></Arrow>
                  <Thumb $share={586} />
                  <Rest $share={161} />
                  <Arrow aria-label="down"><Chev /></Arrow>
                </Track>
              </ScrollArea>
            </DockFrame>
          </Dock>
          <Center>
            <View>
              <Sketch />
              <Corner><NavCube /></Corner>
              <Corner $bottom><AxisCross /></Corner>
            </View>
            <DocTabs>
              <DocTab $w={251}><Logo s={20} /><DocName>1.55 ECX Barrage Wheel : 1</DocName><DocClose aria-label="close"><CloseX /></DocClose></DocTab>
              <DocTab $w={178} $on><Logo s={20} /><DocName>Unnamed1  : 1*</DocName><DocClose $on aria-label="close"><CloseX /></DocClose></DocTab>
              <DocTab $w={113}>
                <svg width="20" height="20" viewBox="0 0 20 20" aria-hidden="true"><path d="M2.500 1h14v18h-14z" fill="#eceeeb" stroke="#8e8e8e" /></svg>
                <DocName>Page*</DocName><DocClose aria-label="close"><CloseX /></DocClose>
              </DocTab>
            </DocTabs>
          </Center>
        </Body>
        <Status>
          <StatusLine />
          <NavStyle>
            <svg width="18" height="17" viewBox="0 0 18 17" fill="none" aria-hidden="true"><rect x="1" y="1" width="16" height="15" rx="3" stroke="#333" strokeWidth="2" /><path d="M1 11h16M9 11v5" stroke="#333" strokeWidth="1.500" /></svg>
            <NavName>Touchpad</NavName>
            <Down />
          </NavStyle>
          <StatusLine />
          <Size>65.86 mm x 34.64 mm</Size>
          <StatusLine />
          <SizeGrip><svg width="11" height="11" viewBox="0 0 11 11" aria-hidden="true"><path d="M8 0h3v3H8zM4 4h3v3H4zM8 4h3v3H8zM0 8h3v3H0zM4 8h3v3H4zM8 8h3v3H8z" fill="#bfbfbf" /></svg></SizeGrip>
        </Status>
      </AppWindow>
      <TaskBar>
        <TaskButton $w={60} aria-label="Start"><svg width="20" height="20" viewBox="0 0 20 20" fill="#fff"><path d="M0 3l8.500-1.200v7.700H0zM9.500 1.600L20 0v9.500H9.500zM0 10.500h8.500v7.700L0 17zM9.500 10.500H20V20L9.500 18.400z" /></svg></TaskButton>
        <SearchBox>
          <svg width="21" height="21" viewBox="0 0 21 21" fill="none" aria-hidden="true"><circle cx="13" cy="8" r="6.500" stroke="#222" strokeWidth="1.500" /><path d="M8.500 12.500L1 20" stroke="#222" strokeWidth="1.500" /></svg>
          <SearchInput type="text" aria-label="search" placeholder="ここに入力して検索" />
        </SearchBox>
        {apps.map(([name, icon]) => (
          <TaskButton key={name} aria-label={name} $on={name === "FreeCAD"} $line={name === "FreeCAD" || name === "Explorer"}>{icon}</TaskButton>
        ))}
        <Tray>
          <TaskButton $w={30} aria-label="hidden icons"><svg width="18" height="10" viewBox="0 0 18 10" fill="none"><path d="M1 9l8-8 8 8" stroke="#fff" strokeWidth="1.500" /></svg></TaskButton>
          <TaskButton $w={30} aria-label="cloud"><svg width="21" height="18" viewBox="0 0 21 18" fill="none"><path d="M4 14a4 4 0 0 1 1-7c1-7 12-7 13 0v7z" fill="#9a9da3" /><path d="M3 14a4 4 0 0 1 2-6c3-2 7 0 8 6z" fill="#e6e6e6" /><circle cx="15" cy="12" r="5.500" fill="#fff" /><path d="M11.500 12a3.500 3.500 0 0 1 6-2M18.500 12a3.500 3.500 0 0 1-6 2" stroke="#1a74c4" strokeWidth="1.800" /></svg></TaskButton>
          <TaskButton $w={29} aria-label="muted"><svg width="19" height="16" viewBox="0 0 19 16" fill="none"><path d="M1 5h3l4-4v14l-4-4H1zM11 4.500l7 7M18 4.500l-7 7" stroke="#fff" strokeWidth="1.300" /></svg></TaskButton>
          <TaskButton $w={30} aria-label="status"><svg width="20" height="20" viewBox="0 0 20 20" fill="none"><circle cx="10" cy="10" r="9" fill="#8f949e" stroke="#4a4f58" /><path d="M6 6l8 8M14 6l-8 8" stroke="#1b2a40" strokeWidth="2.500" /></svg></TaskButton>
          <Clock>15:52<br />2020/03/14</Clock>
          <TaskButton $w={50} aria-label="notifications"><svg width="20" height="20" viewBox="0 0 20 20" fill="none"><path d="M.8.800h18.400v15.400H13l-3 3-3-3H.8z" stroke="#fff" strokeWidth="1.500" /></svg></TaskButton>
          <PeekEdge />
        </Tray>
      </TaskBar>
    </Desktop>
  );
}
